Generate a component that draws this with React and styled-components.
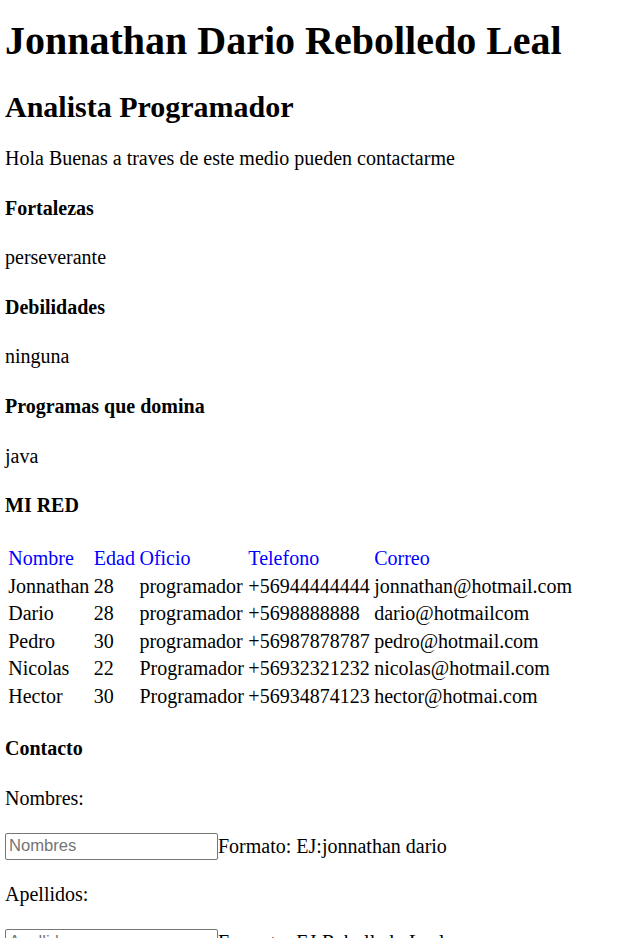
import React from 'react'
import styled, { createGlobalStyle } from 'styled-components'

const GlobalStyle = createGlobalStyle`
  html, body {
    margin: 0;
    padding: 0;
    background: #fff;
  }
  body {
    font-family: "Liberation Serif", "Times New Roman", serif;
    font-size: 20px;
    color: #000;
  }
`

const Page = styled.div`
  padding: 0 5px;
  display: flow-root;
`

const Title = styled.h1`
  font-size: 40px;
  font-weight: bold;
  margin: 17px 0 26px;
`

const Subtitle = styled.h2`
  font-size: 30px;
  font-weight: bold;
  margin: 24px 0 23px;
`

const Text = styled.p`
  margin: 20px 0;
`

const Heading = styled.h4`
  font-size: 20px;
  font-weight: bold;
  margin: 26.6px 0;
`

const Table = styled.table`
  border-collapse: separate;
  border-spacing: 2.5px;
  font-size: 20px;
`

const Cell = styled.td`
  padding: 1.25px;
  color: ${p => (p.$head ? '#0000ff' : '#000')};
  white-space: nowrap;
`

const Row = styled.div`
  display: flex;
  align-items: center;
  padding: 3px 0;
`

const Input = styled.input`
  width: 213px;
  height: 27px;
  box-sizing: border-box;
  border: 1px solid #767676;
  border-radius: 2px;
  padding: 1px 3px;
  font-family: "Liberation Sans", Arial, sans-serif;
  font-size: 16.6px;
  margin: 0;
  &::placeholder {
    color: #757575;
  }
`

const heads = ['Nombre', 'Edad', 'Oficio', 'Telefono', 'Correo']
const people = [
  ['Jonnathan', '28', 'programador', '+56944444444', 'jonnathan@hotmail.com'],
  ['Dario', '28', 'programador', '+5698888888', 'dario@hotmailcom'],
  ['Pedro', '30', 'programador', '+56987878787', 'pedro@hotmail.com'],
  ['Nicolas', '22', 'Programador', '+56932321232', 'nicolas@hotmail.com'],
  ['Hector', '30', 'Programador', '+56934874123', 'hector@hotmai.com'],
]

export default function App() {
  return (
    <Page>
      <GlobalStyle />
      <Title>Jonnathan Dario Rebolledo Leal</Title>
      <Subtitle>Analista Programador</Subtitle>
      <Text>Hola Buenas a traves de este medio pueden contactarme</Text>

      <Heading>Fortalezas</Heading>
      <Text>perseverante</Text>
      <Heading>Debilidades</Heading>
      <Text>ninguna</Text>
      <Heading>Programas que domina</Heading>
      <Text>java</Text>

      <Heading>MI RED</Heading>
      <Table>
        <tbody>
          <tr>
            {heads.map(h => (
              <Cell key={h} $head>{h}</Cell>
            ))}
          </tr>
          {people.map(row => (
            <tr key={row[0]}>
              {row.map((c, i) => (
                <Cell key={i}>{c}</Cell>
              ))}
            </tr>
          ))}
        </tbody>
      </Table>

      <Heading>Contacto</Heading>
      <Text>Nombres:</Text>
      <Row>
        <Input placeholder="Nombres" />
        <span>Formato: EJ:jonnathan dario</span>
      </Row>
      <Text>Apellidos:</Text>
      <Row>
        <Input placeholder="Apellidos" />
        <span>Formato: EJ:Rebolledo Leal</span>
      </Row>
      <Text>Correo:</Text>
    </Page>
  )
}
